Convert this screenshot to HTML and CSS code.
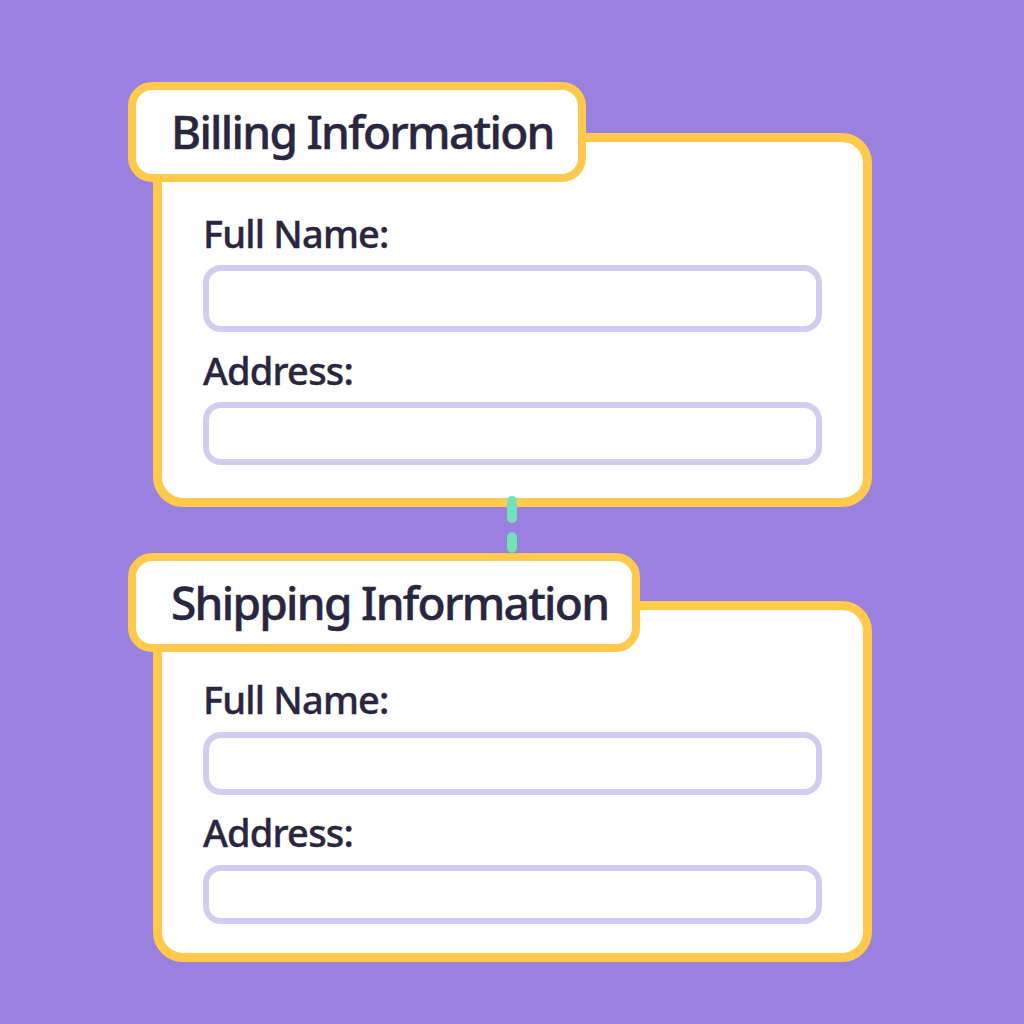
FILE: index.html
```html
<!DOCTYPE html>
<html lang="en">
<head>
<meta charset="utf-8">
<title>Checkout details</title>
<link rel="stylesheet" href="styles.css">
</head>
<body>
<main class="page">
  <section class="group group--billing">
    <h2 class="tab">Billing Information</h2>
    <div class="card">
      <label class="label" for="bill-name">Full Name:</label>
      <input class="field" id="bill-name" type="text">
      <label class="label" for="bill-addr">Address:</label>
      <input class="field" id="bill-addr" type="text">
    </div>
  </section>

  <div class="link" aria-hidden="true">
    <svg width="10" height="57" viewBox="0 0 10 57">
      <rect x="0" y="0" width="10" height="27" rx="5" fill="#72E2B6"/>
      <rect x="0" y="36" width="10" height="21" rx="5" fill="#72E2B6"/>
    </svg>
  </div>

  <section class="group group--shipping">
    <h2 class="tab">Shipping Information</h2>
    <div class="card">
      <label class="label" for="ship-name">Full Name:</label>
      <input class="field" id="ship-name" type="text">
      <label class="label" for="ship-addr">Address:</label>
      <input class="field" id="ship-addr" type="text">
    </div>
  </section>
</main>
</body>
</html>
```
FILE: styles.css
```css
* {
  box-sizing: border-box;
}

html,
body {
  margin: 0;
  height: 100%;
}

body {
  background: #9A80DF;
  font-family: "Noto Sans", "Open Sans", sans-serif;
  color: #2A2641;
}

.page {
  padding: 82px 0 0 128px;
}

.group {
  display: flex;
  flex-direction: column;
  align-items: flex-start;
}

.tab {
  position: relative;
  z-index: 1;
  margin: 0;
  height: 100px;
  padding: 11px 24px 0 35px;
  background: #FFFFFF;
  border: 8px solid #FFC94B;
  border-radius: 24px;
  font-size: 46px;
  letter-spacing: -1.7px;
  line-height: 60px;
  font-weight: 500;
  -webkit-text-stroke: 0.5px currentColor;
  white-space: nowrap;
}

.card {
  display: flex;
  flex-direction: column;
  margin: -49px 0 0 25px;
  width: 719px;
  padding: 69px 41px 33px;
  background: #FFFFFF;
  border: 9px solid #FFC94B;
  border-radius: 30px;
}

.label {
  display: block;
  font-size: 38px;
  letter-spacing: -0.8px;
  line-height: 44px;
  font-weight: 500;
  -webkit-text-stroke: 0.4px currentColor;
  margin-bottom: 10px;
}

.field {
  display: block;
  width: 100%;
  height: 67px;
  margin: 0 0 16px;
  padding: 0 16px;
  background: #FFFFFF;
  border: 6px solid #D3CBF0;
  border-radius: 18px;
  font: inherit;
  outline: none;
}

.field:last-child {
  margin-bottom: 0;
  height: 63px;
}

/* dashed connector between the two panels */
.link {
  position: relative;
  z-index: 2;
  display: flex;
  justify-content: center;
  width: 1024px;
  margin: -11px 0 0 -128px;
  height: 57px;
}

.link svg {
  display: block;
}

.group--shipping .tab {
  height: 99px;
}

.group--shipping .card {
  margin-top: -51px;
  padding-top: 67px;
  padding-bottom: 29px;
}

.group--shipping .label {
  margin-bottom: 11px;
}

.group--shipping .field {
  height: 63px;
  margin-bottom: 15px;
}

.group--shipping .field:last-child {
  height: 59px;
  margin-bottom: 0;
}
```
